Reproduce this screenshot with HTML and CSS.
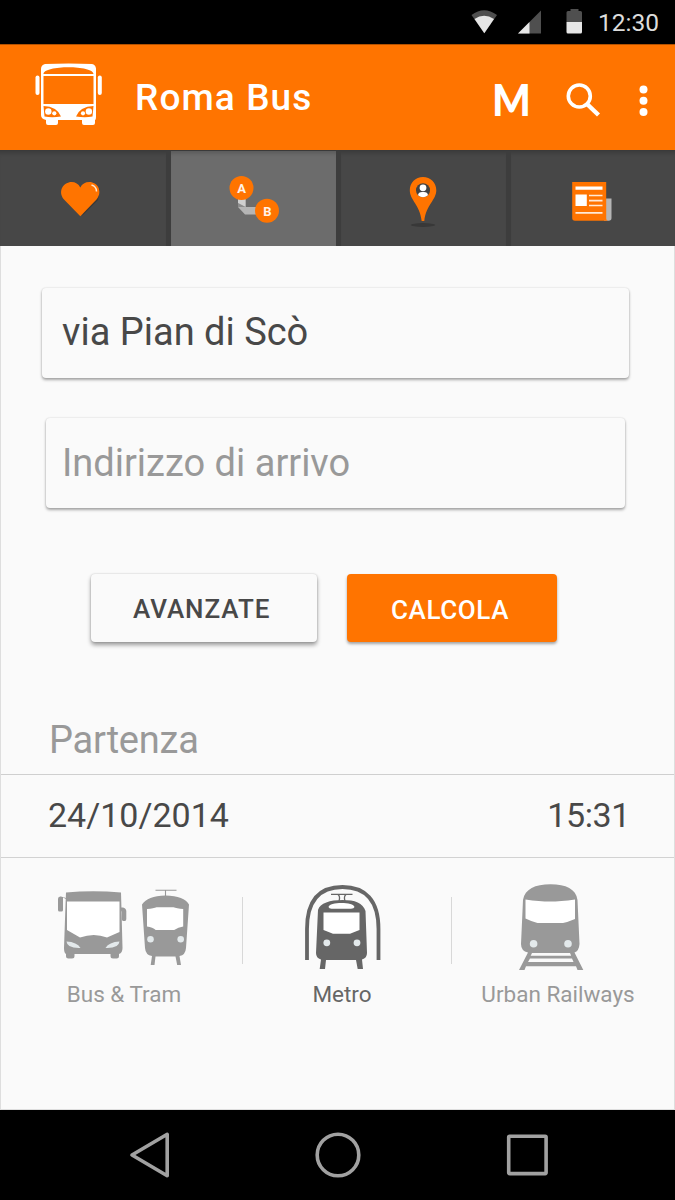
FILE: index.html
```html
<!DOCTYPE html>
<html lang="it">
<head>
<meta charset="utf-8">
<title>Roma Bus</title>
<link rel="stylesheet" href="styles.css">
</head>
<body>
<div class="screen">
  <div class="status">
    <svg width="120" height="44" viewBox="468 0 120 44">
      <path fill="#4f4f4f" d="M471.5 15Q484 5.500 497 15L484.300 33.300Z"/>
      <path fill="#e6e6e6" d="M474.500 19Q484 12.500 494 19L484.300 33.300Z"/>
      <path fill="#4f4f4f" d="M541 10.500V33.500H518Z"/>
      <path fill="#e6e6e6" d="M529.500 22V33.500H518Z"/>
      <path fill="#4f4f4f" d="M570.500 9h8v2h2q1.500 0 1.500 1.500V22h-15.500V12.500q0-1.500 1.500-1.500h2.500z"/>
      <path fill="#e6e6e6" d="M566.500 22H582v10q0 1.500-1.500 1.500h-12.500q-1.500 0-1.500-1.500z"/>
    </svg>
    <span class="clock">12:30</span>
  </div>

  <header class="appbar">
    <svg class="logo" width="68" height="64" viewBox="35 62 68 64">
      <path fill="#fff" d="M45 63Q69 62 92 63Q95.500 63.500 96 67.500V115Q96 119 95 119V122q0 2-2 2H84q-2 0-2-2v-3H58v3q0 2-2 2H48q-2 0-2-2v-3Q41 118 41 114V68Q41 64 45 63Z" transform="translate(0 0)"/>
      <rect fill="#fff" x="35.500" y="74.500" width="4" height="19.500" rx="2"/>
      <rect fill="#fff" x="97.800" y="74.500" width="4" height="19.500" rx="2"/>
      <path fill="#ff7400" d="M43.500 73C43.500 64 93.500 64 93.500 73ZM43.500 75h50v28h-50zM43.500 105Q57 105.500 61 115.500Q52 117 44.500 115.500ZM93.500 105Q80 105.500 76 115.500Q85 117 92.500 115.500Z"/>
      <g fill="#fff"><circle cx="48.300" cy="110.500" r="3.200"/><circle cx="54.300" cy="112.300" r="2.100"/><circle cx="88.900" cy="110.500" r="3.200"/><circle cx="83" cy="112.300" r="2.100"/></g>
    </svg>
    <h1 class="title">Roma Bus</h1>
    <span class="metro-mark">M</span>
    <svg class="actions" width="100" height="40" viewBox="560 80 100 40">
      <circle cx="579.300" cy="96" r="11" fill="none" stroke="#fff" stroke-width="3.600"/>
      <path d="M586.500 103.500L598.500 115" stroke="#fff" stroke-width="4.400"/>
      <g fill="#fff"><circle cx="643.500" cy="89.500" r="4"/><circle cx="643.500" cy="100.800" r="4"/><circle cx="643.500" cy="112" r="4"/></g>
    </svg>
  </header>

  <nav class="tabs">
    <a class="tab">
      <svg width="166" height="96" viewBox="0 150 166 96">
        <path fill="#383838" d="M82 216L98 200L100 188L87 205Z"/>
        <path fill="#ff7400" d="M80.300 216.200L64 199.500C57 191 64 182 71.500 182Q77.500 182 80.300 187.500Q83 182 89.500 182C97 182 103.500 191 96.500 199.500Z"/>
        <path d="M91.500 185Q96.500 186.500 96.500 191.500" fill="none" stroke="#ffe4cb" stroke-width="1.500"/>
      </svg>
    </a>
    <a class="tab tab-on">
      <svg width="164" height="96" viewBox="171 150 164 96">
        <path fill="#b5b5b5" d="M238 197h7.500v10H259v7.500H245L238 207z"/>
        <path fill="#d0d0d0" d="M238 197h7.500v10L238 203z"/>
        <path fill="#8d8d8d" d="M238 203l7.500 4H238z"/>
        <circle cx="241.500" cy="188" r="12" fill="#ff7400"/><circle cx="267" cy="210.700" r="12" fill="#ff7400"/>
        <text class="stop" x="241.500" y="192.900">A</text><text class="stop" x="267.300" y="215.600">B</text>
      </svg>
    </a>
    <a class="tab">
      <svg width="165" height="96" viewBox="341 150 165 96">
        <ellipse cx="423" cy="225" rx="12.200" ry="1.900" fill="#383838"/>
        <path fill="#ff7400" d="M423 177c7.500 0 13.300 5.800 13.300 13.200C436.300 200 426 205 424.300 221h-2.600C420 205 409.800 200 409.800 190.200 409.800 182.800 415.500 177 423 177Z"/>
        <circle cx="423" cy="190.200" r="7" fill="#424242"/>
        <circle cx="423" cy="187.800" r="3.400" fill="#fff"/>
        <path fill="#fff" d="M418 195.200Q418.500 192 422 192h2q3.500 0 4 3.200Q423 199.500 418 195.200Z"/>
      </svg>
    </a>
    <a class="tab">
      <svg width="164" height="96" viewBox="511 150 164 96">
        <path fill="#b5b5b5" d="M604 198.500h7.500V218q0 2.800-2.800 2.800H604z"/>
        <path fill="#ff7400" d="M572.200 182h34v36q0 2.800 2 2.800H575q-2.800 0-2.800-2.800z"/>
        <g fill="#fff"><path d="M575.500 186.500h27v3.300h-27zM575.500 194.500h11.300V206h-11.300z"/><path fill="#ffe9d6" d="M589 194.700h13.500v1.600H589zM589 199.800h13.500v1.600H589zM589 204.700h13.500v1.600H589zM575.500 212h27v1.800h-27z"/></g>
      </svg>
    </a>
  </nav>

  <main class="content">
    <div class="field from"><span class="from-text">via Pian di Scò</span></div>
    <div class="field to"><span class="to-text">Indirizzo di arrivo</span></div>
    <div class="buttons">
      <button class="btn btn-plain"><span class="adv">AVANZATE</span></button>
      <button class="btn btn-main"><span class="calc">CALCOLA</span></button>
    </div>
    <h2 class="section"><span class="dep">Partenza</span></h2>
    <div class="when"><span class="date">24/10/2014</span><span class="time">15:31</span></div>
    <div class="modes">
      <div class="mode mode-bus">
        <svg width="134" height="92" viewBox="57 880 134 92">
          <g fill="#999">
            <path d="M66 892.500Q93 890 121 892.500L121.500 910L122.500 948Q122.500 953 119 954V956q0 2.500-2.500 2.500h-3.500q-2.500 0-2.500-2.500v-2H74.500v2q0 2.500-2.500 2.500h-3.500q-2.500 0-2.500-2.500v-2Q64 953 64 948L65.500 905Z"/>
            <path d="M66 899l-3-1.500V910q0 1.500-1.500 1.500h-2q-1.500 0-1.500-1.500V899q0-3 3-2.500l5 1.500zM121 907.500h2q3 .5 3.300 3.500v8q0 2-1.500 2h-1.500q-1.500 0-1.500-2v-7l-1-2z"/>
            <path d="M155.500 890.300h21M165.500 890v7" fill="none" stroke="#999" stroke-width="1.100"/>
            <path d="M142 904.500C146 899 153 895.500 165.500 895.500S186 899 189 904.500L186 948Q185.500 955 179.500 956L181 965h-3.800L175.500 956.500h-20L154.500 965h-3.800L152 956Q145.500 955 145 948Z"/>
          </g>
          <path fill="#fff" d="M67 901.500h52.500v30.500L107 937.500Q94 932.500 80 937.500L67 930zM147 909q7-.5 9.500-1.700h17q3 1.200 9.700 1.700v17.500q-5 .5-9 3.500h-18.500q-3-3-8.700-3.500z"/>
          <path fill="#e3e9eb" d="M66.500 941.500Q77 942 80.500 948Q67 948.500 66.500 941.500ZM119.500 941.500Q109 942 105.500 948Q119 948.500 119.500 941.500Z"/>
          <g fill="#e3e9eb"><circle cx="150.500" cy="939.200" r="3.300"/><circle cx="180.700" cy="939.200" r="3.300"/></g>
        </svg>
        <span class="m1">Bus &amp; Tram</span>
      </div>
      <i class="rule"></i>
      <div class="mode mode-metro">
        <svg width="78" height="92" viewBox="304 880 78 92">
          <path d="M307 960V929C307 900 320 887 342.500 887S378.500 900 378.500 929V960" fill="none" stroke="#666" stroke-width="3.800"/>
          <path d="M331 894.300h21.500M338 894.500q2.500 2 1 6.500M346 894.500q-2.500 2-1 6.500" fill="none" stroke="#666" stroke-width="1.300"/>
          <path fill="#666" d="M318 910C320 903 330 900 342.500 900S363 903 365.500 911L367 953Q367 958 362 959.500L363 969h-5.300L356 960H326L325 969h-5.300L321 959.500Q316 958 316 953Z"/>
          <path fill="#fff" d="M328.500 907C329 901.500 354 901.500 354.500 907Q354 908.800 351 908.800H331.500Q329 908.800 328.500 907ZM323.500 912.500h36v17.500L350 933.800H333L323.500 930z"/>
          <g fill="#e3e9eb"><circle cx="326.800" cy="942.800" r="3.400"/><circle cx="357" cy="942.800" r="3.400"/></g>
        </svg>
        <span class="m2">Metro</span>
      </div>
      <i class="rule"></i>
      <div class="mode mode-rail">
        <svg width="66" height="92" viewBox="518 880 66 92">
          <path fill="#999" d="M523 900C525 889 535 884.300 550.500 884.300S576 889 577.500 900L579.500 944Q579 951 574.500 952.500L583.300 970H577.500L576 966.300H526L524.500 970H519L528 952.500Q521 951 521 944Z"/>
          <path fill="#fff" d="M525.500 899.500q14 2 24.500 2t25-2v19.500q-7 3-12 4H537.500q-6-1.500-12-4.500z"/>
          <path fill="#fafafa" d="M532 953h38l1.200 2.700h-40.500zM530 958.500h42l1.500 3.600h-45.500z"/>
          <g fill="#e3e9eb"><circle cx="533.600" cy="943.700" r="3.800"/><circle cx="568" cy="943.700" r="3.800"/></g>
        </svg>
        <span class="m3">Urban Railways</span>
      </div>
    </div>
  </main>

  <footer class="navbar">
    <svg width="420" height="90" viewBox="129 1110 420 90" fill="none" stroke="#a1a1a1" stroke-width="3.600" stroke-linejoin="round">
      <path d="M167.200 1134.300V1175.700L132 1155Z"/>
      <circle cx="338" cy="1155" r="20.800"/>
      <rect x="508.700" y="1136.200" width="37.400" height="37.400" rx="1"/>
    </svg>
  </footer>
</div>
</body>
</html>
```
FILE: styles.css
```css
* { box-sizing: border-box; }
body { margin: 0; background: #fafafa; font-family: Roboto, sans-serif; color: #484848; }
svg { display: block; flex: none; }
span, h1, h2 { white-space: nowrap; }
.screen { display: flex; flex-direction: column; width: 675px; height: 1200px; }

.status { display: flex; align-items: flex-start; height: 44px; padding-left: 468px; background: #000; }
.clock { margin-left: 10px; font-size: 24.500px; line-height: 46px; color: #dcdcdc; }

.appbar { display: flex; align-items: center; height: 106px; padding-left: 35px; background: #ff7400; border-top: 1px solid #b35100; color: #fff; }
.logo { margin-top: -6px; }
.title { width: 357px; margin: 0 0 0 32px; font-size: 37px; font-weight: 500; line-height: 106px; letter-spacing: 1.100px; }
.metro-mark { width: 68px; margin-top: 4px; font: 900 43px/106px Lato, sans-serif; transform: scaleX(.95); transform-origin: left; }
.actions { margin-top: 5px; }

.tabs { display: flex; gap: 5px; height: 96px; background: #3d3d3d; border-top: 1px solid #3a3a3a; }
.tab { flex: none; width: 165px; background: #474747; overflow: hidden; box-shadow: inset 0 5px 4px -3px rgba(0,0,0,.18); }
.tab:first-child { width: 166px; }
.tab:last-child { width: 164px; }
.tab svg { margin-top: -1px; }
.tab-on { background: #6c6c6c; }
.stop { font: 700 13px Roboto, sans-serif; fill: #fff3e9; text-anchor: middle; }

.content { display: flex; flex-direction: column; flex: 1; padding-top: 42px; border: 1px solid #dedede; border-top: 0; }
.field { display: flex; height: 90px; border-radius: 4px; background: #fafafa; box-shadow: 0 2px 3px rgba(0,0,0,.33), 0 0 2px rgba(0,0,0,.16); font-size: 38px; line-height: 88px; }
.from { margin: 0 45px 0 41px; padding-left: 20px; }
.to { margin: 40px 49px 0 45px; padding-left: 16px; line-height: 90px; color: #999; }

.buttons { display: flex; gap: 30px; margin: 66px 0 0 90px; }
.btn { display: flex; justify-content: flex-start; height: 68px; padding: 0; border: 0; border-radius: 4px; font: 500 26px/71px Roboto, sans-serif; }
.btn-plain { width: 226px; padding-left: 42px; letter-spacing: .950px; background: #fafafa; color: #484848; box-shadow: 0 3px 4px rgba(0,0,0,.38), 0 0 2px rgba(0,0,0,.2); }
.btn-main { width: 210px; padding-left: 44px; letter-spacing: .600px; background: #ff7400; color: #fff; line-height: 73px; box-shadow: 0 2px 3px rgba(0,0,0,.35); }

.section { height: 133px; margin: 0; padding: 63px 0 0 48px; border-bottom: 1px solid #cfcfcf; font-size: 38px; font-weight: 400; line-height: 70px; letter-spacing: -.200px; color: #999; }
.when { display: flex; justify-content: space-between; height: 83px; padding: 0 44px 0 47px; border-bottom: 1px solid #d2d2d2; font-size: 34px; line-height: 81px; }
.time { letter-spacing: -.400px; }

.modes { display: flex; padding-top: 22px; font-size: 22.500px; line-height: 28px; color: #999; }
.mode { display: flex; flex-direction: column; align-items: center; gap: 8px; }
.mode-bus { width: 134px; margin-left: 56px; }
.mode-metro { width: 78px; margin: 0 69px 0 61px; color: #666; }
.mode-metro span { margin-right: 2px; }
.mode-rail { width: 66px; margin-left: 66px; }
.rule { width: 1px; height: 67px; margin-top: 17px; background: #d8d8d8; }
.mode-bus + .rule { margin-left: 51px; }
.mode-rail span { margin-left: 14px; }

.navbar { height: 90px; padding-left: 129px; background: #000; }
```
